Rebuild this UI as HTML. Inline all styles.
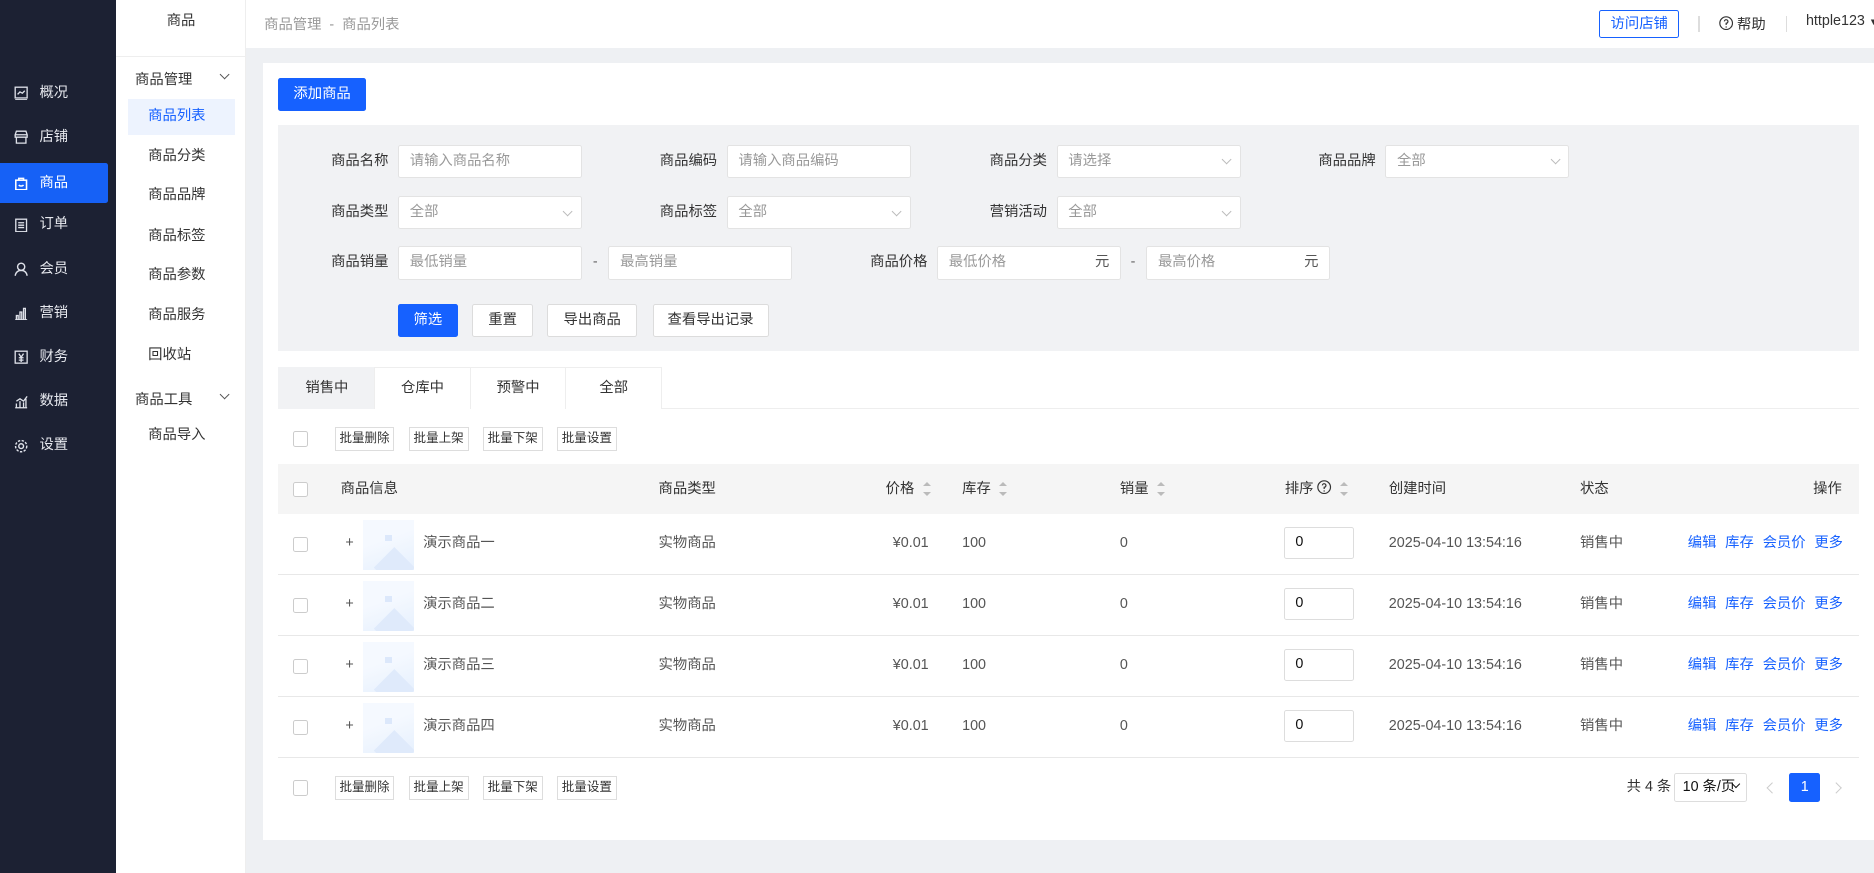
<!DOCTYPE html>
<html><head><meta charset="utf-8"><style>
*{box-sizing:border-box;margin:0;padding:0}
html,body{width:1874px;height:873px;overflow:hidden;background:#eef0f3}
body{font-family:"Liberation Sans","Noto Sans CJK SC",sans-serif;font-size:12px;color:#333;white-space:nowrap}
#r{zoom:1.1952;position:relative;width:1568px;height:731px}
.a{position:absolute}
.side{left:0;top:0;width:97px;height:731px;background:#1c2133}
.mi{position:absolute;left:0;width:90px;height:34px;line-height:34px;color:#e6e8ee;font-size:12px;padding-left:33px}
.mi svg{position:absolute;left:12px;top:11px}
.mi.on{background:#1661f6;color:#fff;border-radius:0 2px 2px 0}
.s2{left:97px;top:0;width:109px;height:731px;background:#fff;border-right:1px solid #eee}
.si{position:absolute;left:10px;width:90px;height:30px;line-height:30px;padding-left:17px;font-size:12px;color:#333}
.card{left:220px;top:53px;width:1348px;height:650px;background:#fff}
.btn{position:absolute;height:28px;line-height:26px;border:1px solid #dcdcdc;background:#fff;text-align:center;font-size:12px;color:#333;border-radius:2px}
.btn.p{background:#1661ff;border-color:#1661ff;color:#fff}
.lab{position:absolute;text-align:right;width:80px;font-size:12px;color:#333;line-height:27px}
.in{position:absolute;height:28px;width:154px;background:#fff;border:1px solid #e3e3e3;line-height:26px;padding-left:9px;color:#999;font-size:12px;border-radius:2px}
.in .ar{position:absolute;right:8px;top:9px;width:6px;height:6px;border-right:1px solid #bbb;border-bottom:1px solid #bbb;transform:rotate(45deg)}
.in .y{position:absolute;right:9px;top:0;color:#555}
.dash{position:absolute;color:#666;line-height:27px}
.tab{position:absolute;top:307px;height:35px;width:81px;line-height:35px;text-align:center;border:1px solid #eee;border-bottom:none;font-size:12px;color:#333;background:#fff}
.cb{position:absolute;width:13px;height:13px;border:1px solid #ccc;border-radius:2px;background:#fff}
.sb{position:absolute;height:20px;width:50px;text-align:center;line-height:18px;border:1px solid #ddd;font-size:10.5px;color:#333;background:#fff}
.th{position:absolute;top:388px;line-height:42px;font-size:12px;color:#333}
.sort{display:inline-block;vertical-align:middle;margin-left:7px;width:7px;height:11px;position:relative}
.sort:before{content:"";position:absolute;top:0;left:0;border:3.5px solid transparent;border-bottom:4px solid #bbb;border-top:none}
.sort:after{content:"";position:absolute;bottom:0;left:0;border:3.5px solid transparent;border-top:4px solid #bbb;border-bottom:none}
.row{position:absolute;left:233px;width:1322px;height:51px;border-bottom:1px solid #e8e8e8}
.row .t{position:absolute;top:0;line-height:50px;font-size:12px;color:#555}
.img{position:absolute;left:71px;top:5px;width:42px;height:42px;background:linear-gradient(160deg,#f5f9ff 40%,#e6f0fd);overflow:hidden}
.img:after{content:"";position:absolute;left:14px;top:28px;width:24px;height:24px;background:#dfeafb;transform:rotate(45deg)}
.img:before{content:"";position:absolute;left:18px;top:13px;width:6px;height:5px;background:#dce8fb}
.sin{position:absolute;left:841px;top:11px;width:59px;height:27px;border:1px solid #ddd;border-radius:2px;line-height:25px;padding-left:9px;color:#111}
.op{position:absolute;top:0;line-height:50px;color:#1661ff;font-size:12px;right:13px;word-spacing:4px}
</style></head><body><div id="r">
<div class="a side">
 <div class="mi" style="top:61px"><svg width="12" height="12" viewBox="0 0 12 12" fill="none" stroke="#dfe2ea" stroke-width="1.1"><rect x="1" y="1" width="10" height="9"/><path d="M3 7l2-2 2 1 2-2M1 11.5h10"/></svg>概况</div>
 <div class="mi" style="top:98px"><svg width="12" height="12" viewBox="0 0 12 12" fill="none" stroke="#dfe2ea" stroke-width="1.1"><path d="M2 1h8l1 3H1zM1 4v2h10V4M2 6v5h8V6"/></svg>店铺</div>
 <div class="mi on" style="top:136px"><svg width="12" height="12" viewBox="0 0 12 12" fill="none" stroke="#fff" stroke-width="1.3"><rect x="1.5" y="3.5" width="9" height="8"/><path d="M4 3.5V2h4v1.5M4 7.5c1 1.2 3 1.2 4 0"/></svg>商品</div>
 <div class="mi" style="top:171px"><svg width="12" height="12" viewBox="0 0 12 12" fill="none" stroke="#dfe2ea" stroke-width="1.1"><rect x="1.5" y="1" width="9" height="10.5"/><path d="M3.5 4h5M3.5 6h5M3.5 8h5"/></svg>订单</div>
 <div class="mi" style="top:208px"><svg width="12" height="12" viewBox="0 0 12 12" fill="none" stroke="#dfe2ea" stroke-width="1.2"><circle cx="6" cy="4" r="3"/><path d="M1 11.5c.5-3 2.5-4.5 5-4.5s4.5 1.5 5 4.5"/></svg>会员</div>
 <div class="mi" style="top:245px"><svg width="12" height="12" viewBox="0 0 12 12" fill="none" stroke="#dfe2ea" stroke-width="1.1"><path d="M1 11.5h10M2 11V8h1.5v3M5 11V5h1.5v6M8 11V2h1.5v9"/></svg>营销</div>
 <div class="mi" style="top:282px"><svg width="12" height="12" viewBox="0 0 12 12" fill="none" stroke="#dfe2ea" stroke-width="1.1"><rect x="1" y="1" width="10" height="10"/><path d="M4 3l2 3 2-3M6 6v4M4 6.5h4M4 8.5h4"/></svg>财务</div>
 <div class="mi" style="top:319px"><svg width="12" height="12" viewBox="0 0 12 12" fill="none" stroke="#dfe2ea" stroke-width="1.1"><path d="M1 11.5h10M2 11V8M5 11V6M8 11V7M10 11V4M2 6l3-2 3 2 3-4"/></svg>数据</div>
 <div class="mi" style="top:356px"><svg width="12" height="12" viewBox="0 0 12 12" fill="none" stroke="#dfe2ea" stroke-width="1.2"><circle cx="6" cy="6" r="2"/><circle cx="6" cy="6" r="4.7" stroke-dasharray="2 1.2"/></svg>设置</div>
</div>
<div class="a s2">
 <div class="a" style="left:0;top:0;width:109px;height:48px;line-height:36px;text-align:center;font-size:12px;border-bottom:1px solid #eee">商品</div>
 <div class="a" style="left:16px;top:57px;font-size:12px">商品管理</div>
 <div class="a" style="left:88px;top:59px;width:6px;height:6px;border-right:1px solid #555;border-bottom:1px solid #555;transform:rotate(45deg)"></div>
 <div class="si" style="top:83px;background:#edf3fe;color:#1661ff">商品列表</div>
 <div class="si" style="top:116px">商品分类</div>
 <div class="si" style="top:149px">商品品牌</div>
 <div class="si" style="top:183px">商品标签</div>
 <div class="si" style="top:216px">商品参数</div>
 <div class="si" style="top:249px">商品服务</div>
 <div class="si" style="top:283px">回收站</div>
 <div class="a" style="left:16px;top:325px;font-size:12px">商品工具</div>
 <div class="a" style="left:88px;top:327px;width:6px;height:6px;border-right:1px solid #555;border-bottom:1px solid #555;transform:rotate(45deg)"></div>
 <div class="si" style="top:350px">商品导入</div>
</div>
<div class="a" style="left:206px;top:0;width:1362px;height:40px;background:#fff"></div>
<div class="a" style="left:221px;top:11px;color:#999;font-size:12px">商品管理 &nbsp;- &nbsp;商品列表</div>
<div class="a" style="left:1338px;top:8px;width:67px;height:24px;border:1px solid #1661ff;border-radius:2px;color:#1661ff;text-align:center;line-height:22px">访问店铺</div>
<div class="a" style="left:1421px;top:13px;width:1px;height:14px;background:#ddd"></div>
<div class="a" style="left:1438px;top:11px;color:#333">
 <svg width="12" height="12" viewBox="0 0 12 12" style="vertical-align:-1px" fill="none" stroke="#333"><circle cx="6" cy="6" r="5.3"/><path d="M4.5 4.5a1.5 1.5 0 1 1 1.5 1.6V7.5M6 8.7v1"/></svg> 帮助</div>
<div class="a" style="left:1494px;top:13px;width:1px;height:14px;background:#ddd"></div>
<div class="a" style="left:1511px;top:11px;color:#333">httple123 <span style="font-size:8px">▼</span></div>

<div class="a card"></div>
<div class="btn p" style="left:233px;top:65px;width:73px">添加商品</div>
<div class="a" style="left:233px;top:105px;width:1322px;height:189px;background:#f1f2f4"></div>
<div class="lab" style="left:245px;top:121px">商品名称</div><div class="in" style="left:333px;top:121px">请输入商品名称</div>
<div class="lab" style="left:520px;top:121px">商品编码</div><div class="in" style="left:608px;top:121px">请输入商品编码</div>
<div class="lab" style="left:796px;top:121px">商品分类</div><div class="in" style="left:884px;top:121px">请选择<i class="ar"></i></div>
<div class="lab" style="left:1071px;top:121px">商品品牌</div><div class="in" style="left:1159px;top:121px">全部<i class="ar"></i></div>
<div class="lab" style="left:245px;top:164px">商品类型</div><div class="in" style="left:333px;top:164px">全部<i class="ar"></i></div>
<div class="lab" style="left:520px;top:164px">商品标签</div><div class="in" style="left:608px;top:164px">全部<i class="ar"></i></div>
<div class="lab" style="left:796px;top:164px">营销活动</div><div class="in" style="left:884px;top:164px">全部<i class="ar"></i></div>
<div class="lab" style="left:245px;top:206px">商品销量</div><div class="in" style="left:333px;top:206px">最低销量</div>
<div class="dash" style="left:496px;top:206px">-</div><div class="in" style="left:509px;top:206px">最高销量</div>
<div class="lab" style="left:696px;top:206px">商品价格</div><div class="in" style="left:784px;top:206px">最低价格<span class="y">元</span></div>
<div class="dash" style="left:946px;top:206px">-</div><div class="in" style="left:959px;top:206px">最高价格<span class="y">元</span></div>
<div class="btn p" style="left:333px;top:254px;width:50px">筛选</div>
<div class="btn" style="left:395px;top:254px;width:51px">重置</div>
<div class="btn" style="left:458px;top:254px;width:75px">导出商品</div>
<div class="btn" style="left:546px;top:254px;width:97px">查看导出记录</div>

<div class="a" style="left:233px;top:341px;width:1322px;height:1px;background:#eee"></div>
<div class="tab" style="left:233px;background:#f1f2f4;border-color:#f1f2f4">销售中</div>
<div class="tab" style="left:313px">仓库中</div>
<div class="tab" style="left:393px">预警中</div>
<div class="tab" style="left:473px">全部</div>

<div class="cb" style="left:245px;top:361px"></div>
<div class="sb" style="left:280px;top:357px">批量删除</div><div class="sb" style="left:342px;top:357px">批量上架</div><div class="sb" style="left:404px;top:357px">批量下架</div><div class="sb" style="left:466px;top:357px">批量设置</div>

<div class="a" style="left:233px;top:388px;width:1322px;height:42px;background:#f5f5f5"></div>
<div class="cb" style="left:245px;top:403px"></div>
<div class="th" style="left:285px">商品信息</div>
<div class="th" style="left:551px">商品类型</div>
<div class="th" style="left:741px">价格<i class="sort"></i></div>
<div class="th" style="left:805px">库存<i class="sort"></i></div>
<div class="th" style="left:937px">销量<i class="sort"></i></div>
<div class="th" style="left:1075px">排序 <svg width="12" height="12" viewBox="0 0 12 12" style="vertical-align:-1px" fill="none" stroke="#333"><circle cx="6" cy="6" r="5.3"/><path d="M4.5 4.5a1.5 1.5 0 1 1 1.5 1.6V7.5M6 8.7v1"/></svg><i class="sort"></i></div>
<div class="th" style="left:1162px">创建时间</div>
<div class="th" style="left:1322px">状态</div>
<div class="th" style="left:1517px">操作</div>

<div class="row" style="top:430px"><div class="cb" style="left:12px;top:19px"></div><span class="t" style="left:56px">+</span><div class="img"></div><span class="t" style="left:121px">演示商品一</span><span class="t" style="left:318px">实物商品</span><span class="t" style="left:514px">¥0.01</span><span class="t" style="left:572px">100</span><span class="t" style="left:704px">0</span><div class="sin">0</div><span class="t" style="left:929px">2025-04-10 13:54:16</span><span class="t" style="left:1089px">销售中</span><span class="op">编辑 库存 会员价 更多</span></div>
<div class="row" style="top:481px"><div class="cb" style="left:12px;top:19px"></div><span class="t" style="left:56px">+</span><div class="img"></div><span class="t" style="left:121px">演示商品二</span><span class="t" style="left:318px">实物商品</span><span class="t" style="left:514px">¥0.01</span><span class="t" style="left:572px">100</span><span class="t" style="left:704px">0</span><div class="sin">0</div><span class="t" style="left:929px">2025-04-10 13:54:16</span><span class="t" style="left:1089px">销售中</span><span class="op">编辑 库存 会员价 更多</span></div>
<div class="row" style="top:532px"><div class="cb" style="left:12px;top:19px"></div><span class="t" style="left:56px">+</span><div class="img"></div><span class="t" style="left:121px">演示商品三</span><span class="t" style="left:318px">实物商品</span><span class="t" style="left:514px">¥0.01</span><span class="t" style="left:572px">100</span><span class="t" style="left:704px">0</span><div class="sin">0</div><span class="t" style="left:929px">2025-04-10 13:54:16</span><span class="t" style="left:1089px">销售中</span><span class="op">编辑 库存 会员价 更多</span></div>
<div class="row" style="top:583px"><div class="cb" style="left:12px;top:19px"></div><span class="t" style="left:56px">+</span><div class="img"></div><span class="t" style="left:121px">演示商品四</span><span class="t" style="left:318px">实物商品</span><span class="t" style="left:514px">¥0.01</span><span class="t" style="left:572px">100</span><span class="t" style="left:704px">0</span><div class="sin">0</div><span class="t" style="left:929px">2025-04-10 13:54:16</span><span class="t" style="left:1089px">销售中</span><span class="op">编辑 库存 会员价 更多</span></div>

<div class="cb" style="left:245px;top:653px"></div>
<div class="sb" style="left:280px;top:649px">批量删除</div><div class="sb" style="left:342px;top:649px">批量上架</div><div class="sb" style="left:404px;top:649px">批量下架</div><div class="sb" style="left:466px;top:649px">批量设置</div>
<div class="a" style="left:1361px;top:647px;line-height:24px;color:#333">共 4 条</div>
<div class="a" style="left:1401px;top:647px;width:61px;height:24px;border:1px solid #ddd;border-radius:2px;line-height:22px;padding-left:6px;color:#111">10 条/页<span style="position:absolute;right:6px;top:6px;width:5px;height:5px;border-right:1.5px solid #111;border-bottom:1.5px solid #111;transform:rotate(45deg)"></span></div>
<div class="a" style="left:1479px;top:656px;width:7px;height:7px;border-left:1px solid #ccc;border-bottom:1px solid #ccc;transform:rotate(45deg)"></div>
<div class="a" style="left:1497px;top:647px;width:26px;height:24px;background:#1661ff;border-radius:2px;color:#fff;text-align:center;line-height:24px">1</div>
<div class="a" style="left:1533px;top:656px;width:7px;height:7px;border-right:1px solid #ccc;border-top:1px solid #ccc;transform:rotate(45deg)"></div>
</div></body></html>
